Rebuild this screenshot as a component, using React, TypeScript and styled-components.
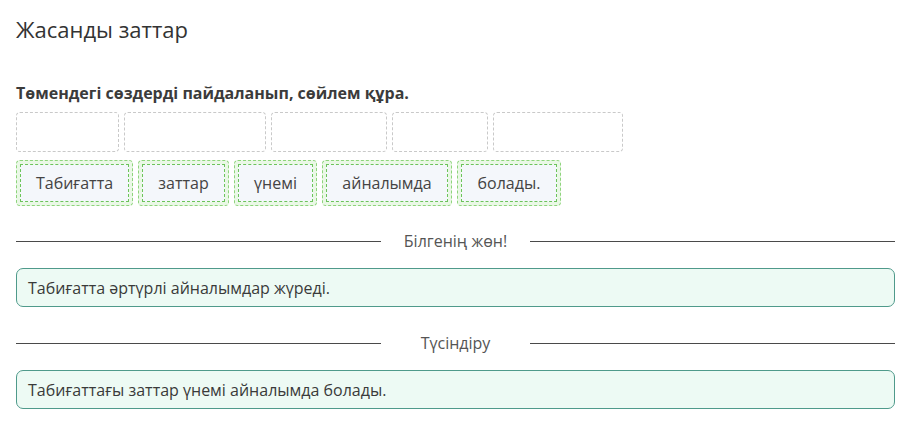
import React from "react";
import styled, { createGlobalStyle } from "styled-components";

const GlobalStyle = createGlobalStyle`
  body {
    margin: 0;
    background: #ffffff;
    font-family: "Open Sans", "Noto Sans", sans-serif;
    color: #333;
  }
`;

const Page = styled.div`
  width: 910px;
  box-sizing: border-box;
  padding: 14px 15px 0 16px;
  display: flex;
  flex-direction: column;
`;

const Title = styled.h1`
  margin: 0;
  font-size: 22px;
  line-height: 30px;
  font-weight: 400;
  color: #333;
`;

const Question = styled.h2`
  margin: 38px 0 0;
  font-size: 16px;
  line-height: 22px;
  font-weight: 700;
  color: #3b3b3b;
`;

const SlotRow = styled.div`
  display: flex;
  gap: 5px;
  margin-top: 8px;
`;

const Slot = styled.div<{ w: number }>`
  width: ${(p) => p.w}px;
  height: 40px;
  box-sizing: border-box;
  border: 1px dashed #c9c9c9;
  border-radius: 4px;
`;

const ChipRow = styled.div`
  display: flex;
  gap: 5px;
  margin-top: 8px;
`;

const Chip = styled.div<{ w: number }>`
  box-sizing: border-box;
  width: ${(p) => p.w}px;
  height: 46px;
  padding: 3px;
  border: 1px dashed #8ed47c;
  border-radius: 4px;
  background: #eaf8e6;
  display: flex;
`;

const ChipInner = styled.div`
  flex: 1;
  box-sizing: border-box;
  border: 1px dashed #6cc45a;
  background: #f4f7fb;
  display: flex;
  align-items: center;
  justify-content: center;
  font-size: 16px;
  color: #444;
`;

const Divider = styled.div<{ top: number }>`
  display: grid;
  grid-template-columns: 1fr 149px 1fr;
  align-items: center;
  margin-top: ${(p) => p.top}px;
  height: 24px;
`;

const Line = styled.div`
  height: 1px;
  background: #4a4a4a;
`;

const DividerText = styled.div`
  text-align: center;
  font-size: 16px;
  color: #555;
`;

const AnswerBox = styled.div`
  margin-top: 15px;
  box-sizing: border-box;
  height: 39px;
  border: 1px solid #4f9a8b;
  border-radius: 7px;
  background: #edfaf4;
  display: flex;
  align-items: center;
  padding: 0 11px;
  font-size: 16px;
  color: #3a3a3a;
`;

const slots = [103, 142, 116, 96, 130];
const words: [string, number][] = [
  ["Табиғатта", 117],
  ["заттар", 91],
  ["үнемі", 83],
  ["айналымда", 130],
  ["болады.", 104],
];

export default function App() {
  return (
    <>
      <GlobalStyle />
      <Page>
        <Title>Жасанды заттар</Title>
        <Question>Төмендегі сөздерді пайдаланып, сөйлем құра.</Question>
        <SlotRow>
          {slots.map((w, i) => (
            <Slot key={i} w={w} />
          ))}
        </SlotRow>
        <ChipRow>
          {words.map(([t, w]) => (
            <Chip key={t} w={w}>
              <ChipInner>{t}</ChipInner>
            </Chip>
          ))}
        </ChipRow>
        <Divider top={23}>
          <Line />
          <DividerText>Білгенің жөн!</DividerText>
          <Line />
        </Divider>
        <AnswerBox>Табиғатта әртүрлі айналымдар жүреді.</AnswerBox>
        <Divider top={24}>
          <Line />
          <DividerText>Түсіндіру</DividerText>
          <Line />
        </Divider>
        <AnswerBox>Табиғаттағы заттар үнемі айналымда болады.</AnswerBox>
      </Page>
    </>
  );
}
